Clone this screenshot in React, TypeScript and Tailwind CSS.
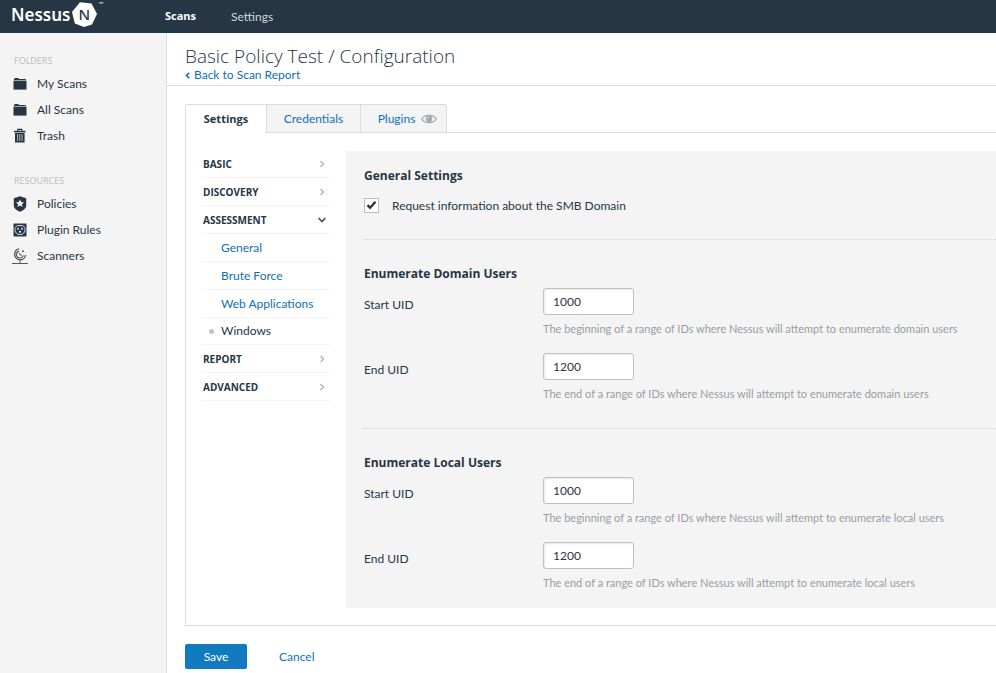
import { useState } from "react";
import type { ReactNode } from "react";

const FolderIcon = () => (
  <svg width="14" height="14" viewBox="0 0 14 14">
    <path d="M1 2.2 1.8 1h3.4l.8 1h6.4l.8 1H.8z" fill="#263645" />
    <path d="M.5 3.6h13v9H.5z" fill="#263645" />
  </svg>
);

const TrashIcon = () => (
  <svg width="14" height="16" viewBox="0 0 14 16" fill="none" stroke="#263645">
    <path d="M4.8 3V1.3h4V3" strokeWidth="1.2" />
    <path d="M1 3.6h11.6" strokeWidth="1.6" />
    <path d="M2 5h9.6v9.5H2z" fill="#263645" stroke="none" />
    <path d="M4.6 6v7M6.8 6v7M9 6v7" stroke="#c5cacd" strokeWidth="0.9" />
  </svg>
);

const ShieldIcon = () => (
  <svg width="14" height="16" viewBox="0 0 14 16">
    <path d="M7 0.3 13.2 2.2v7.3C13.2 12.4 10 14.6 7 15.7 4 14.6.8 12.4.8 9.5V2.2z" fill="#263645" />
    <path d="m7 3.5 1.2 2.6 2.9.3-2.2 1.9.7 2.8L7 9.6l-2.6 1.5.7-2.8-2.2-1.9 2.9-.3z" fill="#f4f4f4" />
  </svg>
);

const PlugIcon = () => (
  <svg width="14" height="14" viewBox="0 0 14 14">
    <rect x="0.5" y="0.5" width="13" height="13" rx="1" fill="#263645" />
    <path d="M4.2 2.6h5.6a4.8 4.8 0 0 1 0 8.2L9 11.4H5l-.8-.6a4.8 4.8 0 0 1 0-8.2z" fill="none" stroke="#d8dcde" />
    <path d="M5 4.8v2M9 4.8v2" stroke="#fff" strokeWidth="1.2" />
    <circle cx="7" cy="8.8" r="1" fill="#fff" />
  </svg>
);

const RadarIcon = () => (
  <svg width="16" height="17" viewBox="0 0 16 17" fill="none" stroke="#4c5964">
    <path d="M7 .9A5.5 5.5 0 1 0 13.6 7" strokeWidth="1.4" />
    <path d="M7.2 3.1a3.5 3.5 0 1 0 4.1 4.3" strokeWidth="1.1" />
    <path d="M7.8 5v2h2.1" />
    <circle cx="11" cy="3.2" r="1" fill="#4c5964" stroke="none" />
    <path d="M8 12.3V15M0 15.5h16" />
  </svg>
);

const EyeIcon = () => (
  <svg width="16" height="10" viewBox="0 0 16 10" fill="none" stroke="#a3a7aa">
    <path d="M.8 5C3.5.2 12.5.2 15.2 5 12.5 9.8 3.5 9.8.8 5z" strokeWidth="1.3" />
    <circle cx="8" cy="4.8" r="2.8" fill="#a3a7aa" />
    <path d="M6.5 4.4A1.6 1.6 0 0 1 8 3" stroke="#f4f4f4" />
  </svg>
);

const Chevron = ({ open }: { open?: boolean }) =>
  open ? (
    <svg width="10" height="8" viewBox="0 0 10 8" fill="none" stroke="#4d5357" strokeWidth="1.7">
      <path d="M1.5 2 5 5.5 8.5 2" />
    </svg>
  ) : (
    <svg width="10" height="8" viewBox="0 0 10 8" fill="none" stroke="#b5b5b5" strokeWidth="1.4">
      <path d="M3.5 1 6.5 4 3.5 7" />
    </svg>
  );

const Logo = () => (
  <a href="#home" className="flex h-full w-[154px] items-center pl-[11px] text-white">
    <span className="pb-1 font-['Noto_Sans'] text-[17px] leading-5 font-semibold">Nessus</span>
    <svg width="27" height="27" viewBox="0 0 27 27" className="mb-1 ml-px">
      <path d="M9 1.2 20.5 2.6 26 13 21 23.5 13 26 3.8 22.5 1 11z" fill="#fff" />
      <text x="13.2" y="19" textAnchor="middle" fontSize="15" fontFamily="Noto Sans, sans-serif" fontWeight="500" fill="#263645">
        N
      </text>
    </svg>
    <span className="self-start text-[6px] leading-2">™</span>
  </a>
);

const SideGroup = ({ title, items }: { title: string; items: { label: string; icon: ReactNode }[] }) => (
  <section className="pb-6">
    <h2 className="pl-[14px] font-['Open_Sans'] text-[9px] leading-4 text-[#b9bcbe]">{title}</h2>
    <ul className="pt-[2px]">
      {items.map((item) => (
        <li key={item.label}>
          <a href="#folder" className="flex h-[26px] items-center pl-3">
            <span className="flex w-4 justify-center">{item.icon}</span>
            <span className="pl-[9px]">{item.label}</span>
          </a>
        </li>
      ))}
    </ul>
  </section>
);

const NavGroup = ({ label, open, children }: { label: string; open?: boolean; children?: ReactNode }) => (
  <li>
    <button type="button" className="flex h-7 w-full items-center justify-between border-b border-dotted border-[#e9e9e9] pt-px pr-[2px] font-['Open_Sans'] text-[10px] font-bold">
      {label}
      <Chevron open={open} />
    </button>
    {children}
  </li>
);

const Field = ({ id, label, value, help }: { id: string; label: string; value: string; help: string }) => (
  <div className="flex pb-4">
    <label htmlFor={id} className="w-[179px] shrink-0 pt-[9px] leading-4">
      {label}
    </label>
    <div className="min-w-0">
      <input
        id={id}
        defaultValue={value}
        className="block h-[27px] w-[91px] rounded-[3px] border border-[#bfbfbf] bg-white px-[9px] shadow-[inset_1px_1px_2px_#e8e8e8] outline-none"
      />
      <p className="pt-[6px] text-[11px] leading-4 text-[#999da0]">{help}</p>
    </div>
  </div>
);

const UidSection = ({ kind, last }: { kind: "domain" | "local"; last?: boolean }) => (
  <section className={last ? "pt-6 pb-[1px] pl-[18px]" : "pl-[18px]"}>
    <div className={last ? "" : "border-b border-dotted border-[#cfcfcf] pt-6 pb-[10px]"}>
      <h3 className="pb-1 font-['Open_Sans'] text-[12px] leading-5 font-bold">
        {kind === "domain" ? "Enumerate Domain Users" : "Enumerate Local Users"}
      </h3>
      <Field
        id={kind + "-start"}
        label="Start UID"
        value="1000"
        help={`The beginning of a range of IDs where Nessus will attempt to enumerate ${kind} users`}
      />
      <Field
        id={kind + "-end"}
        label="End UID"
        value="1200"
        help={`The end of a range of IDs where Nessus will attempt to enumerate ${kind} users`}
      />
    </div>
  </section>
);

export default function App() {
  const [smb, setSmb] = useState(true);
  return (
    <div className="flex min-h-screen flex-col overflow-x-hidden bg-white font-['Lato','Noto_Sans',sans-serif] text-[12px] text-[#263645]">
      <header className="flex h-[33px] shrink-0 items-center bg-[#263645]">
        <Logo />
        <nav className="flex gap-[35px] pl-[11px]">
          <a href="#scans" className="font-['Open_Sans'] text-[11px] font-bold text-white">Scans</a>
          <a href="#settings" className="text-[#d3d7da]">Settings</a>
        </nav>
      </header>
      <div className="flex flex-1">
        <aside className="w-[167px] shrink-0 border-r border-[#dcdcdc] bg-[#f4f4f4] pt-5">
          <SideGroup
            title="FOLDERS"
            items={[
              { label: "My Scans", icon: <FolderIcon /> },
              { label: "All Scans", icon: <FolderIcon /> },
              { label: "Trash", icon: <TrashIcon /> },
            ]}
          />
          <SideGroup
            title="RESOURCES"
            items={[
              { label: "Policies", icon: <ShieldIcon /> },
              { label: "Plugin Rules", icon: <PlugIcon /> },
              { label: "Scanners", icon: <RadarIcon /> },
            ]}
          />
        </aside>
        <main className="min-w-0 flex-1">
          <div className="h-[53px] border-b border-[#dcdcdc] pt-3 pl-[18px]">
            <h1 className="font-['Open_Sans'] text-[19px] leading-[22px] font-light">Basic Policy Test / Configuration</h1>
            <a href="#report" className="flex items-center gap-1 leading-4 text-[#0e71b8]">
              <svg width="5" height="7" viewBox="0 0 5 7" fill="none" stroke="#0e71b8" strokeWidth="1.6">
                <path d="M4.2.8 1.5 3.5 4.2 6.2" />
              </svg>
              Back to Scan Report
            </a>
          </div>
          <div className="pt-[18px] pl-[18px]">
            <div role="tablist" className="relative z-10 -mb-px flex h-[29px]">
              <button type="button" role="tab" aria-selected="true" className="w-[82px] rounded-tl-[3px] border border-b-0 border-[#dcdcdc] bg-white font-['Open_Sans'] text-[11px] font-bold">
                Settings
              </button>
              <button type="button" role="tab" aria-selected="false" className="w-[94px] border-y border-r border-[#dcdcdc] bg-[#f4f4f4] text-[#0e71b8]">
                Credentials
              </button>
              <button type="button" role="tab" aria-selected="false" className="flex w-[86px] items-center justify-center gap-[6px] rounded-tr-[3px] border-y border-r border-[#dcdcdc] bg-[#f4f4f4] pl-2 text-[#0e71b8]">
                Plugins
                <EyeIcon />
              </button>
            </div>
            <div className="flex border-y border-l border-[#dcdcdc] pt-[18px] pb-[17px]">
              <nav className="w-[160px] shrink-0 pr-[17px] pl-[17px]">
                <ul className="-mt-px">
                  <NavGroup label="BASIC" />
                  <NavGroup label="DISCOVERY" />
                  <NavGroup label="ASSESSMENT" open>
                    <ul>
                      {["General", "Brute Force", "Web Applications"].map((label) => (
                        <li key={label}>
                          <a href="#section" className="flex h-7 items-center border-b border-dotted border-[#e9e9e9] pl-[18px] text-[#0e71b8]">
                            {label}
                          </a>
                        </li>
                      ))}
                      <li className="flex h-[27px] items-center border-b border-dotted border-[#e9e9e9] pl-[6px]">
                        <span className="mr-[7px] size-[5px] rounded-full bg-[#c4c4c4]" />
                        Windows
                      </li>
                    </ul>
                  </NavGroup>
                  <NavGroup label="REPORT" />
                  <NavGroup label="ADVANCED" />
                </ul>
              </nav>
              <div className="min-w-0 flex-1 bg-[#f4f4f4]">
                <section className="pl-[18px]">
                  <div className="border-b border-dotted border-[#cfcfcf] pt-[15px] pb-6">
                    <h3 className="font-['Open_Sans'] text-[12px] leading-5 font-bold">General Settings</h3>
                    <label className="flex items-center gap-[13px] pt-[10px] leading-[19px]">
                      <span className="relative flex size-[15px]">
                        <input
                          type="checkbox"
                          checked={smb}
                          onChange={(e) => setSmb(e.target.checked)}
                          className="size-[15px] appearance-none border border-[#bdbdbd] bg-white"
                        />
                        {smb && (
                          <svg width="15" height="15" viewBox="0 0 15 15" fill="none" stroke="#263645" strokeWidth="2.4" className="pointer-events-none absolute inset-0">
                            <path d="m3.5 7.2 2.6 2.6 5.4-6" />
                          </svg>
                        )}
                      </span>
                      Request information about the SMB Domain
                    </label>
                  </div>
                </section>
                <UidSection kind="domain" />
                <UidSection kind="local" last />
              </div>
            </div>
            <div className="flex pt-[18px]">
              <button type="button" className="h-[25px] w-[62px] rounded-[2px] bg-[#127abf] text-white">Save</button>
              <button type="button" className="ml-8 text-[#0e71b8]">Cancel</button>
            </div>
          </div>
        </main>
      </div>
    </div>
  );
}
